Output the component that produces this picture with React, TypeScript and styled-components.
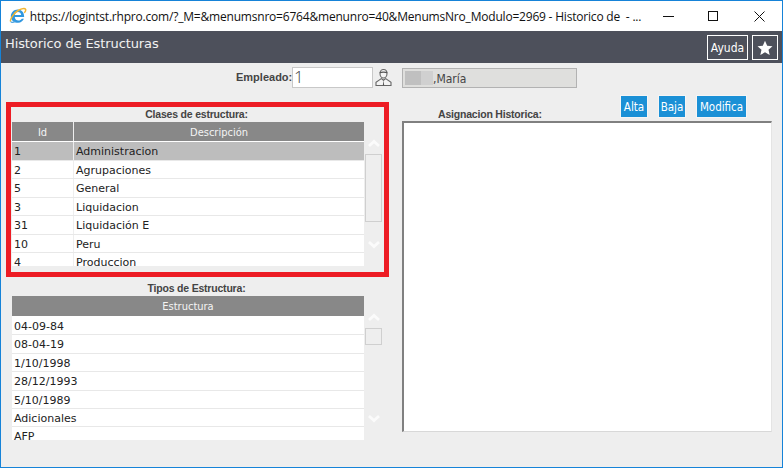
import React from "react";
import styled, { createGlobalStyle } from "styled-components";

const GlobalStyle = createGlobalStyle`
  html, body {
    margin: 0;
    padding: 0;
    background: #eeeeee;
  }
  * {
    box-sizing: border-box;
  }
`;

const clases = [
  { id: "1", name: "Administracion" },
  { id: "2", name: "Agrupaciones" },
  { id: "5", name: "General" },
  { id: "3", name: "Liquidacion" },
  { id: "31", name: "Liquidación E" },
  { id: "10", name: "Peru" },
  { id: "4", name: "Produccion" },
];

const tipos = ["04-09-84", "08-04-19", "1/10/1998", "28/12/1993", "5/10/1989", "Adicionales", "AFP"];

function IeIcon() {
  return (
    <svg width="18" height="18" viewBox="0 0 18 18">
      <g transform="translate(-1.300 -1) scale(1.120)">
        <path d="M2.800 9.500c0-3.800 2.800-6.300 6.200-6.300s5.700 2.500 5.700 6.600H6.300c.2 2 1.500 3.200 3.300 3.200 1.300 0 2.300-.6 3-1.600h1.900c-.9 2.100-2.700 3.500-5.100 3.500-3.500 0-6.600-2-6.600-5.400z" fill="#2f97e0" />
        <path d="M6.400 8h5.600c-.1-1.600-1.300-2.700-2.800-2.700S6.600 6.400 6.400 8z" fill="#ffffff" />
      </g>
      <path d="M1.700 14.500C.300 12.500 5.500 5.200 10 3c3.200-1.500 6-1.800 6.600-.6.500 1-.4 2.400-1.300 3.500" fill="none" stroke="#f2b632" strokeWidth="1.500" />
      <path d="M1.700 14.500c.7 1.200 2.600 1 4.600-.1" fill="none" stroke="#4aa3e0" strokeWidth="1.300" />
    </svg>
  );
}

function PersonIcon() {
  return (
    <svg width="17" height="19" viewBox="0 0 17 19">
      <path d="M5 5.500C5 3 6.500 1.500 8.500 1.500S12 3 12 5.500 10.500 10 8.500 10 5 8 5 5.500z" fill="#f4f4f4" stroke="#666666" strokeWidth="1.100" />
      <path d="M4.700 4.700c1.500-.9 6-.9 7.600 0" fill="none" stroke="#555555" strokeWidth="1.300" />
      <path d="M6.300 10.600 1 14.200V17.500h15v-3.300l-5.300-3.600-2.200 1.600z" fill="#f4f4f4" stroke="#666666" strokeWidth="1.100" />
      <path d="M8.500 12.200 7.800 17.500h1.400z" fill="#555555" />
    </svg>
  );
}

function Chevron({ down }: { down?: boolean }) {
  return (
    <svg width="12" height="9" viewBox="0 0 12 9">
      <polyline
        points={down ? "1,2 6,6.500 11,2" : "1,7 6,2.500 11,7"}
        fill="none"
        stroke="#fbfbfb"
        strokeWidth="2.800"
      />
    </svg>
  );
}

function Scroller({ thumb, arrowsGap }: { thumb: number; arrowsGap: number }) {
  return (
    <ScrollTrack>
      <ScrollArrow $top={15}>
        <Chevron />
      </ScrollArrow>
      <ScrollThumb $height={thumb} />
      <ScrollArrow $top={arrowsGap}>
        <Chevron down />
      </ScrollArrow>
    </ScrollTrack>
  );
}

export default function App() {
  return (
    <>
      <GlobalStyle />
      <Window>
        <TitleBar>
          <IeSlot>
            <IeIcon />
          </IeSlot>
          <Url>https://logintst.rhpro.com/?_M=&amp;menumsnro=6764&amp;menunro=40&amp;MenumsNro_Modulo=2969 - Historico de&nbsp; - ...</Url>
          <WindowControls>
            <ControlButton>
              <svg width="11" height="11" viewBox="0 0 11 11">
                <path d="M0 5.500h11" stroke="#111111" strokeWidth="1" />
              </svg>
            </ControlButton>
            <ControlButton>
              <svg width="11" height="11" viewBox="0 0 11 11">
                <rect x="0.500" y="0.500" width="9" height="9" fill="none" stroke="#111111" strokeWidth="1" />
              </svg>
            </ControlButton>
            <ControlButton>
              <svg width="11" height="11" viewBox="0 0 11 11">
                <path d="M.500.500l10 10M10.500.500l-10 10" stroke="#111111" strokeWidth="1" />
              </svg>
            </ControlButton>
          </WindowControls>
        </TitleBar>

        <Header>
          <HeaderTitle>Historico de Estructuras</HeaderTitle>
          <HeaderActions>
            <OutlineButton>Ayuda</OutlineButton>
            <StarButton>
              <svg width="16" height="16" viewBox="0 0 16 16">
                <path d="M8 .8l2.200 4.900 5.300.6-4 3.500 1.200 5.300L8 12.300l-4.700 2.800 1.200-5.300-4-3.500 5.300-.6z" fill="#ffffff" />
              </svg>
            </StarButton>
          </HeaderActions>
        </Header>

        <EmployeeRow>
          <EmployeeLabel>Empleado:</EmployeeLabel>
          <EmployeeInput>1</EmployeeInput>
          <PersonSlot>
            <PersonIcon />
          </PersonSlot>
          <NameField>
            <Redacted />
            <NameText>,María</NameText>
          </NameField>
        </EmployeeRow>

        <Columns>
          <LeftColumn>
            <Highlight>
              <SectionTitle>Clases de estructura:</SectionTitle>
              <GridWithScroll>
                <div>
                  <HeadRow $height={20}>
                    <HeadCell $width={61}>Id</HeadCell>
                    <HeadCell $grow>Descripción</HeadCell>
                  </HeadRow>
                  <Rows $height={124}>
                    {clases.map((c, i) => (
                      <Row key={c.id} $pitch={18.5} $selected={i === 0}>
                        <IdCell>{c.id}</IdCell>
                        <NameCell>{c.name}</NameCell>
                      </Row>
                    ))}
                  </Rows>
                </div>
                <Scroller thumb={68} arrowsGap={16} />
              </GridWithScroll>
            </Highlight>

            <LowerBlock>
              <SectionTitle>Tipos de Estructura:</SectionTitle>
              <GridWithScroll>
                <div>
                  <HeadRow $height={21}>
                    <HeadCell $grow>Estructura</HeadCell>
                  </HeadRow>
                  <Rows $height={123}>
                    {tipos.map((t) => (
                      <Row key={t} $pitch={18.4}>
                        <NameCell>{t}</NameCell>
                      </Row>
                    ))}
                  </Rows>
                </div>
                <Scroller thumb={17} arrowsGap={67} />
              </GridWithScroll>
            </LowerBlock>
          </LeftColumn>

          <RightColumn>
            <RightTop>
              <RightTitle>Asignacion Historica:</RightTitle>
              <BlueButton $width={28} $gap={10}>Alta</BlueButton>
              <BlueButton $width={28} $gap={10}>Baja</BlueButton>
              <BlueButton $width={51}>Modifica</BlueButton>
            </RightTop>
            <HistoryBox />
          </RightColumn>
        </Columns>
      </Window>
    </>
  );
}

const Window = styled.div`
  width: 783px;
  height: 468px;
  border: 1px solid #1683d8;
  background: #eeeeee;
  overflow: hidden;
  display: flex;
  flex-direction: column;
  font-family: "DejaVu Sans", sans-serif;
`;

const TitleBar = styled.div`
  height: 30px;
  flex: none;
  background: #ffffff;
  display: flex;
  align-items: center;
`;

const IeSlot = styled.div`
  width: 29px;
  padding-left: 8px;
  display: flex;
  align-items: center;
`;

const Url = styled.div`
  width: 621px;
  font-family: "Open Sans", sans-serif;
  font-size: 12px;
  letter-spacing: -0.2px;
  white-space: nowrap;
  color: #111111;
`;

const WindowControls = styled.div`
  display: flex;
  margin-left: 2px;
`;

const ControlButton = styled.div`
  width: 45.500px;
  height: 30px;
  display: flex;
  align-items: center;
  justify-content: center;
`;

const Header = styled.div`
  height: 32px;
  flex: none;
  background: #4d505b;
  display: flex;
  justify-content: space-between;
  padding: 4px 4px 0 4px;
`;

const HeaderTitle = styled.div`
  font-size: 13px;
  line-height: 18px;
  letter-spacing: -0.1px;
  color: #f2f2f2;
`;

const HeaderActions = styled.div`
  display: flex;
  gap: 4px;
`;

const OutlineButton = styled.div`
  width: 41px;
  height: 25px;
  border: 1px solid #ffffff;
  color: #ffffff;
  font-family: "DejaVu Sans Condensed", "DejaVu Sans", sans-serif;
  font-size: 12px;
  display: flex;
  align-items: center;
  justify-content: center;
`;

const StarButton = styled(OutlineButton)`
  width: 26px;
`;

const EmployeeRow = styled.div`
  flex: none;
  height: 25px;
  padding: 4px 0 0 235px;
  display: flex;
  align-items: flex-start;
`;

const EmployeeLabel = styled.div`
  width: 56px;
  font-family: "Liberation Sans", sans-serif;
  font-weight: bold;
  font-size: 11px;
  line-height: 21px;
  white-space: nowrap;
  color: #444444;
`;

const EmployeeInput = styled.div`
  width: 81px;
  height: 21px;
  background: #ffffff;
  border: 1px solid #c8c8c8;
  font-family: "Open Sans", sans-serif;
  font-weight: 300;
  font-size: 17px;
  line-height: 18px;
  padding-left: 1px;
  color: #444444;
`;

const PersonSlot = styled.div`
  width: 29px;
  padding: 1px 0 0 2px;
`;

const NameField = styled.div`
  width: 175px;
  height: 20px;
  margin-top: 1px;
  background: #dfdfdd;
  border: 1px solid #b2b2b2;
  display: flex;
  align-items: center;
  padding-left: 2px;
  font-family: "DejaVu Sans Condensed", "DejaVu Sans", sans-serif;
  font-size: 12px;
  color: #444444;
`;

const NameText = styled.span`
  padding-top: 1px;
`;

const Redacted = styled.span`
  width: 28px;
  height: 14px;
  background: linear-gradient(90deg, #c0c0c0 0 16px, #d0d0d0 16px 100%);
`;

const Columns = styled.div`
  flex: 1;
  display: flex;
  min-height: 0;
`;

const LeftColumn = styled.div`
  width: 401px;
  padding: 14px 0 0 5px;
`;

const Highlight = styled.div`
  width: 383px;
  height: 175px;
  border: 5px solid #ed1c24;
  padding-left: 1px;
`;

const LowerBlock = styled.div`
  padding: 4px 0 0 6px;
`;

const SectionTitle = styled.div`
  width: 369px;
  height: 15px;
  text-align: center;
  font-family: "Liberation Sans", sans-serif;
  font-weight: bold;
  font-size: 10.500px;
  letter-spacing: -0.2px;
  line-height: 15px;
  color: #444444;
`;

const GridWithScroll = styled.div`
  display: grid;
  grid-template-columns: 352px 17px;
  gap: 1px;
`;

const HeadRow = styled.div<{ $height: number }>`
  display: flex;
  height: ${(p) => p.$height}px;
  gap: 1px;
  border-bottom: 1px solid #ffffff;
`;

const HeadCell = styled.div<{ $width?: number; $grow?: boolean }>`
  width: ${(p) => (p.$width ? `${p.$width}px` : "auto")};
  flex: ${(p) => (p.$grow ? 1 : "none")};
  background: #888888;
  color: #f4f4f4;
  font-family: "DejaVu Sans Condensed", "DejaVu Sans", sans-serif;
  font-size: 11px;
  line-height: 22px;
  text-align: center;
`;

const Rows = styled.div<{ $height: number }>`
  height: ${(p) => p.$height}px;
  overflow: hidden;
  background: #ffffff;
`;

const Row = styled.div<{ $pitch: number; $selected?: boolean }>`
  height: ${(p) => p.$pitch}px;
  display: flex;
  background: ${(p) => (p.$selected ? "#bdbdbd" : "#ffffff")};
  border-bottom: 1px solid #e8e8e8;
  font-size: 11px;
  line-height: 19px;
  color: #222222;
`;

const IdCell = styled.div`
  width: 62px;
  padding-left: 2px;
  border-right: 1px solid #eeeeee;
`;

const NameCell = styled.div`
  padding-left: 2px;
`;

const ScrollTrack = styled.div`
  display: flex;
  flex-direction: column;
  align-items: center;
`;

const ScrollArrow = styled.div<{ $top: number }>`
  height: 12px;
  margin-top: ${(p) => p.$top}px;
  display: flex;
  align-items: center;
`;

const ScrollThumb = styled.div<{ $height: number }>`
  width: 17px;
  height: ${(p) => p.$height}px;
  margin-top: 5px;
  border: 1px solid #cfcfcf;
  background: #eeeeee;
`;

const RightColumn = styled.div`
  flex: 1;
  padding-top: 7px;
`;

const RightTop = styled.div`
  height: 26px;
  display: flex;
  align-items: flex-start;
`;

const RightTitle = styled.div`
  width: 218px;
  flex: none;
  padding: 12px 0 0 36px;
  font-family: "Liberation Sans", sans-serif;
  font-weight: bold;
  font-size: 10.500px;
  letter-spacing: -0.2px;
  line-height: 14px;
  white-space: nowrap;
  color: #444444;
`;

const BlueButton = styled.div<{ $width: number; $gap?: number }>`
  width: ${(p) => p.$width}px;
  height: 23px;
  flex: none;
  margin-right: ${(p) => p.$gap ?? 0}px;
  padding-top: 1px;
  background: #1b90d6;
  border: 1px solid #f5f5f5;
  color: #ffffff;
  font-family: "DejaVu Sans Condensed", "DejaVu Sans", sans-serif;
  font-size: 11.500px;
  display: flex;
  align-items: center;
  justify-content: center;
`;

const HistoryBox = styled.div`
  width: 370px;
  height: 311px;
  background: #ffffff;
  border-top: 2px solid #808080;
  border-left: 2px solid #808080;
  border-right: 1px solid #e4e4e4;
  border-bottom: 1px solid #d8d8d8;
`;
